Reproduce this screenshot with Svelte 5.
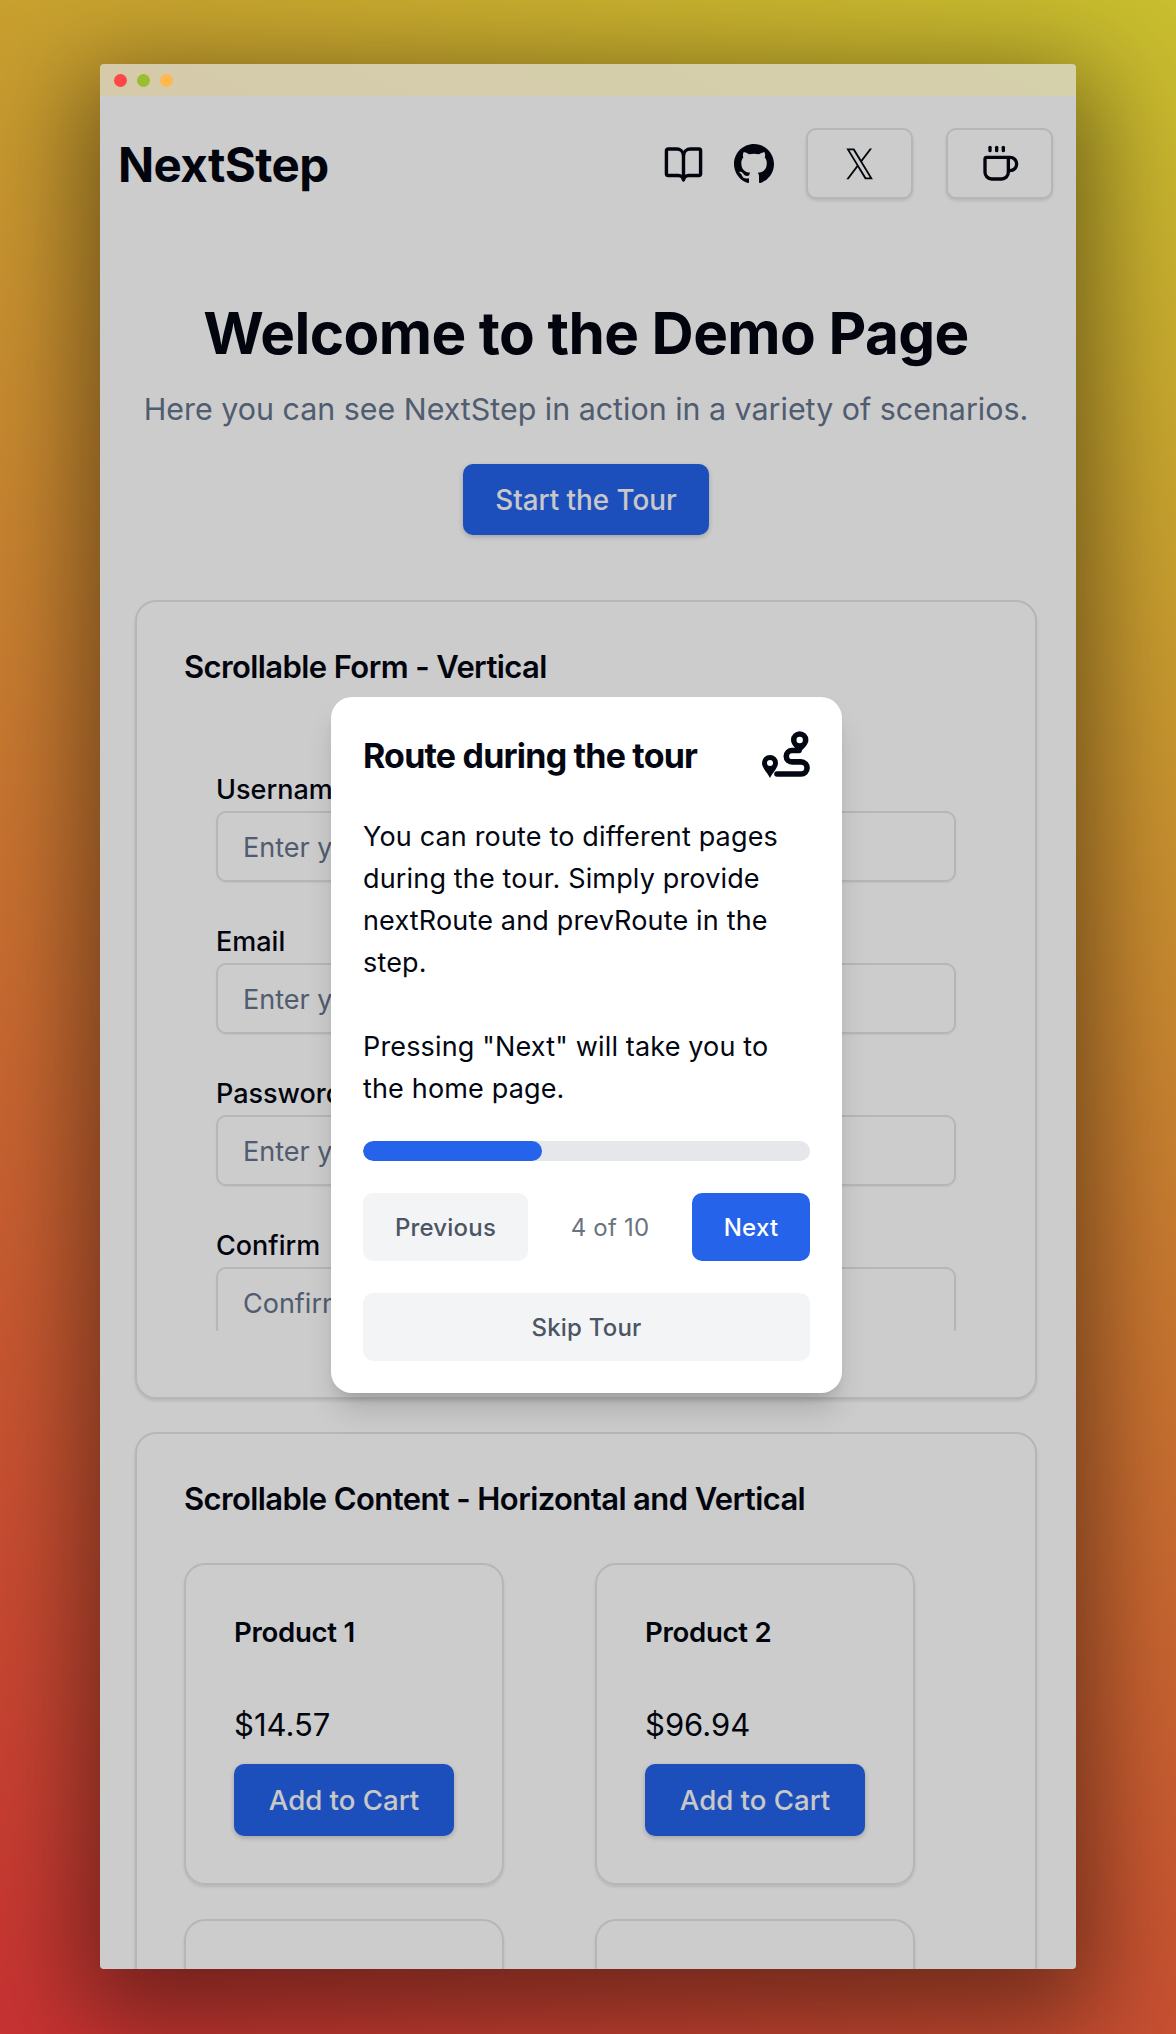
<script>
  const fields = [
    { label: 'Username', placeholder: 'Enter your username' },
    { label: 'Email', placeholder: 'Enter your email' },
    { label: 'Password', placeholder: 'Enter your password' },
    { label: 'Confirm Password', placeholder: 'Confirm your password' },
  ];

  const products = [
    { name: 'Product 1', price: '$14.57' },
    { name: 'Product 2', price: '$96.94' },
    { name: 'Product 3', price: '$41.20' },
    { name: 'Product 4', price: '$63.08' },
  ];
</script>

<div class="backdrop">
  <div class="window">
    <div class="titlebar">
      <span class="dot red"></span>
      <span class="dot green"></span>
      <span class="dot amber"></span>
    </div>

    <div class="viewport">
      <header class="nav">
        <div class="logo">NextStep</div>
        <div class="nav-actions">
          <svg class="book" viewBox="0 0 24 24" fill="none" stroke="currentColor" stroke-width="2" stroke-linecap="round" stroke-linejoin="round">
            <path d="M12 6.5v15" />
            <path d="M3 19a1 1 0 0 1-1-1V4.5a1 1 0 0 1 1-1h5a4 4 0 0 1 4 3.5 4 4 0 0 1 4-3.5h5a1 1 0 0 1 1 1V18a1 1 0 0 1-1 1h-6a3 3 0 0 0-3 2.5 3 3 0 0 0-3-2.5z" />
          </svg>
          <svg class="github" viewBox="0 0 16 16" fill="currentColor">
            <path d="M8 0C3.58 0 0 3.58 0 8c0 3.54 2.29 6.53 5.47 7.59.4.07.55-.17.55-.38 0-.19-.01-.82-.01-1.49-2.01.37-2.53-.49-2.69-.94-.09-.23-.48-.94-.82-1.13-.28-.15-.68-.52-.01-.53.63-.01 1.08.58 1.23.82.72 1.21 1.87.87 2.33.66.07-.52.28-.87.51-1.07-1.78-.2-3.64-.89-3.64-3.95 0-.87.31-1.59.82-2.15-.08-.2-.36-1.02.08-2.12 0 0 .67-.21 2.2.82.64-.18 1.32-.27 2-.27s1.36.09 2 .27c1.53-1.04 2.2-.82 2.2-.82.44 1.1.16 1.92.08 2.12.51.56.82 1.27.82 2.15 0 3.07-1.87 3.75-3.65 3.95.29.25.54.73.54 1.48 0 1.07-.01 1.93-.01 2.2 0 .21.15.46.55.38A8.01 8.01 0 0 0 16 8c0-4.42-3.58-8-8-8z" />
          </svg>
          <button class="icon-btn" aria-label="X">
            <svg class="x-logo" viewBox="0 0 24 24" preserveAspectRatio="none" fill="currentColor">
              <path d="M14.2 10.5 22.4 1h-1.900l-7.100 8.200L7.700 1H1.100l8.600 12.500L1.100 23.500H3l7.500-8.700 6 8.700h6.600zm-2.700 3.100-.9-1.200L3.700 2.400h3l5.600 8 .9 1.200 7.300 10.500h-3z" />
            </svg>
          </button>
          <button class="icon-btn" aria-label="Coffee">
            <svg class="coffee" viewBox="0 0 24 24" fill="none" stroke="currentColor" stroke-width="2" stroke-linecap="round" stroke-linejoin="round">
              <path d="M10 2v2" />
              <path d="M14 2v2" />
              <path d="M6 2v2" />
              <path d="M16 8a1 1 0 0 1 1 1v8a4 4 0 0 1-4 4H7a4 4 0 0 1-4-4V9a1 1 0 0 1 1-1h14a4 4 0 1 1 0 8h-1" />
            </svg>
          </button>
        </div>
      </header>

      <main class="page">
        <section class="hero">
          <h1>Welcome to the Demo Page</h1>
          <p>Here you can see NextStep in action in a variety of scenarios.</p>
          <button class="primary start">Start the Tour</button>
        </section>

        <section class="card form-card">
          <h2>Scrollable Form - Vertical</h2>
          <div class="form-scroll">
            {#each fields as field}
              <div class="field">
                <span class="field-label">{field.label}</span>
                <div class="input">{field.placeholder}</div>
              </div>
            {/each}
          </div>
        </section>

        <section class="card products-card">
          <h2>Scrollable Content - Horizontal and Vertical</h2>
          <div class="products">
            {#each products as product}
              <div class="product">
                <h3>{product.name}</h3>
                <div class="price">{product.price}</div>
                <button class="primary add">Add to Cart</button>
              </div>
            {/each}
          </div>
        </section>
      </main>

      <div class="overlay"></div>

      <div class="popover">
        <div class="pop-head">
          <h4>Route during the tour</h4>
          <svg class="route" viewBox="0 0 48 49" fill="none">
            <path fill="currentColor" fill-rule="evenodd" d="M37.700 0.300a8.700 8.700 0 0 1 8.700 8.700c0 4.500-4.700 8.500-8.700 12.500-4-4-8.700-8-8.700-12.500a8.700 8.700 0 0 1 8.700-8.700zm0 5.500a3.200 3.200 0 1 0 0 6.400 3.200 3.200 0 0 0 0-6.400z" />
            <path fill="currentColor" fill-rule="evenodd" d="M8 24a8 8 0 0 1 8 8c0 5-5 9-8 15-3-6-8-10-8-15a8 8 0 0 1 8-8zm0 5a3 3 0 1 0 0 6 3 3 0 0 0 0-6z" />
            <path stroke="currentColor" stroke-width="5.600" stroke-linecap="round" d="M37 19.500h-7a5.700 5.700 0 0 0 0 11.400h9a6 6 0 0 1 0 12.100H15" />
          </svg>
        </div>
        <p>You can route to different pages during the tour. Simply provide nextRoute and prevRoute in the step.</p>
        <p class="second">Pressing "Next" will take you to the home page.</p>
        <div class="progress"><div class="progress-fill" style="width: 40%"></div></div>
        <div class="pop-controls">
          <button class="soft prev">Previous</button>
          <span class="count">4 of 10</span>
          <button class="next">Next</button>
        </div>
        <button class="soft skip">Skip Tour</button>
      </div>
    </div>
  </div>
</div>

<style>
  :global(body) {
    margin: 0;
    font-family: Inter, 'Noto Sans', sans-serif;
  }

  * {
    box-sizing: border-box;
  }

  .backdrop {
    width: 1176px;
    height: 2034px;
    padding: 64px 100px 65px;
    overflow: hidden;
    background: linear-gradient(25deg, #c83232 0%, #c8be2e 100%);
  }

  .window {
    height: 100%;
    border-radius: 4px;
    overflow: hidden;
    display: flex;
    flex-direction: column;
    box-shadow: 0 30px 100px 20px rgba(0, 0, 0, 0.45);
  }

  .titlebar {
    flex: none;
    height: 32px;
    display: flex;
    align-items: center;
    gap: 10px;
    padding-left: 14px;
    background: rgba(218, 218, 214, 0.75);
  }

  .dot {
    width: 13px;
    height: 13px;
    border-radius: 50%;
  }

  .red { background: #ff4747; }
  .green { background: #9cbd2f; }
  .amber { background: #ffb84f; }

  .viewport {
    flex: 1;
    position: relative;
    overflow: hidden;
    background: #fff;
    color: #030712;
  }

  .overlay {
    position: absolute;
    inset: 0;
    background: rgba(0, 0, 0, 0.2);
  }

  .nav {
    display: flex;
    align-items: center;
    justify-content: space-between;
    padding: 32px 23px 0 18px;
  }

  .logo {
    height: 71px;
    font-size: 47.500px;
    font-weight: 700;
    letter-spacing: -0.6px;
    line-height: 73px;
  }

  .nav-actions {
    display: flex;
    align-items: center;
  }

  .book {
    width: 41px;
    height: 41px;
    margin-right: 30px;
  }

  .github {
    width: 40px;
    height: 40px;
    margin-right: 32px;
  }

  .icon-btn {
    width: 107px;
    height: 71px;
    display: flex;
    align-items: center;
    justify-content: center;
    padding: 0;
    background: #fff;
    color: #030712;
    border: 2px solid #e4e4e7;
    border-radius: 10px;
    box-shadow: 0 2px 3px rgba(0, 0, 0, 0.1);
  }

  .icon-btn + .icon-btn {
    margin-left: 33px;
  }

  .x-logo {
    width: 29px;
    height: 33px;
  }

  .coffee {
    width: 40px;
    height: 40px;
  }

  .page {
    width: 972px;
    padding: 0 35px;
  }

  .hero {
    display: flex;
    flex-direction: column;
    align-items: center;
    padding-top: 99px;
  }

  h1 {
    margin: 0;
    font-size: 58.400px;
    font-weight: 700;
    line-height: 70px;
    letter-spacing: -0.6px;
  }

  .hero p {
    margin: 21px 0 0;
    font-size: 30.400px;
    line-height: 40px;
    white-space: nowrap;
    color: #64748b;
  }

  .primary {
    font-family: inherit;
    color: #fafafa;
    background: #2563eb;
    border: 0;
    border-radius: 10px;
    box-shadow: 0 2px 5px rgba(0, 0, 0, 0.2);
  }

  .start {
    width: 246px;
    height: 71px;
    margin-top: 35px;
    font-size: 27.800px;
    font-weight: 500;
  }

  .card {
    background: #fff;
    border: 2px solid #e4e4e7;
    border-radius: 21px;
    box-shadow: 0 2px 3px rgba(0, 0, 0, 0.1);
  }

  .form-card {
    height: 799px;
    margin-top: 65px;
    padding: 47px 47px 0;
  }

  h2 {
    margin: 0;
    font-size: 31px;
    line-height: 36px;
    font-weight: 600;
    letter-spacing: -0.6px;
  }

  .form-scroll {
    height: 646px;
    padding: 88px 32px 0;
    overflow: hidden;
  }

  .field {
    margin-bottom: 43px;
  }

  .field-label {
    display: block;
    height: 38px;
    font-size: 27px;
    font-weight: 500;
    line-height: 34px;
    word-spacing: 3px;
  }

  .input {
    height: 71px;
    padding: 2px 0 0 25px;
    display: flex;
    align-items: center;
    font-size: 27px;
    color: #64748b;
    border: 2px solid #e4e4e7;
    border-radius: 10px;
    box-shadow: 0 1px 2px rgba(0, 0, 0, 0.06);
  }

  .products-card {
    height: 620px;
    margin-top: 33px;
    padding: 47px 47px 0;
  }

  .products {
    display: grid;
    grid-template-columns: 320px 320px;
    column-gap: 91px;
    row-gap: 34px;
    margin-top: 46px;
  }

  .product {
    height: 322px;
    padding: 50px 48px 0;
    border: 2px solid #e4e4e7;
    border-radius: 21px;
    box-shadow: 0 2px 3px rgba(0, 0, 0, 0.1);
  }

  h3 {
    margin: 0;
    font-size: 27.600px;
    line-height: 34px;
    font-weight: 600;
    letter-spacing: -0.3px;
  }

  .price {
    margin-top: 59px;
    font-size: 31px;
    line-height: 34px;
  }

  .add {
    display: block;
    width: 220px;
    height: 72px;
    margin-top: 22px;
    font-size: 27.600px;
    font-weight: 500;
  }

  .popover {
    position: absolute;
    left: 231px;
    top: 601px;
    width: 511px;
    padding: 32px;
    background: #fff;
    border-radius: 21px;
    box-shadow: 0 20px 30px -5px rgba(0, 0, 0, 0.16), 0 8px 12px -6px rgba(0, 0, 0, 0.12);
    color: #030712;
  }

  .pop-head {
    display: flex;
    align-items: center;
    justify-content: space-between;
    height: 52px;
  }

  h4 {
    margin: 0;
    font-size: 34px;
    font-weight: 700;
    letter-spacing: -0.8px;
  }

  .route {
    width: 48px;
    height: 49px;
  }

  .popover p {
    margin: 35px 0 0;
    font-size: 27px;
    line-height: 42px;
    letter-spacing: 0.16px;
  }

  .popover p.second {
    margin-top: 42px;
  }

  .progress {
    height: 20px;
    margin-top: 31px;
    border-radius: 10px;
    background: #e5e7eb;
    overflow: hidden;
  }

  .progress-fill {
    height: 100%;
    border-radius: 10px;
    background: #2563eb;
  }

  .pop-controls {
    display: flex;
    align-items: center;
    justify-content: space-between;
    margin-top: 32px;
  }

  .popover button {
    height: 68px;
    border: 0;
    border-radius: 10px;
    font-family: inherit;
    font-size: 24px;
    font-weight: 500;
    letter-spacing: 0.2px;
  }

  .soft {
    background: #f3f4f6;
    color: #4b5563;
  }

  .prev {
    width: 165px;
  }

  .count {
    font-size: 24px;
    letter-spacing: 0.2px;
    color: #6b7280;
  }

  .next {
    width: 118px;
    background: #2563eb;
    color: #fff;
  }

  .skip {
    display: block;
    width: 100%;
    margin-top: 32px;
  }
</style>
